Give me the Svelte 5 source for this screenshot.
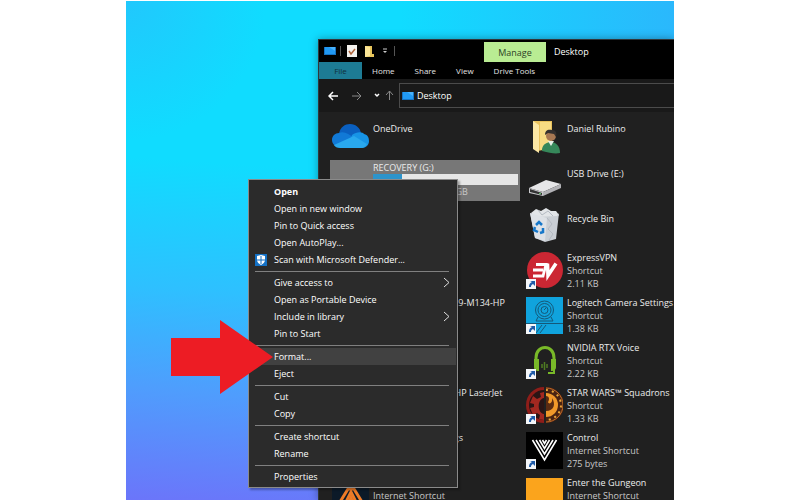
<script>
    const menuGroups = [
        [
            { label: 'Open', primary: true },
            { label: 'Open in new window' },
            { label: 'Pin to Quick access' },
            { label: 'Open AutoPlay...' },
            { label: 'Scan with Microsoft Defender...', shield: true }
        ],
        [
            { label: 'Give access to', submenu: true },
            { label: 'Open as Portable Device' },
            { label: 'Include in library', submenu: true },
            { label: 'Pin to Start' }
        ],
        [{ label: 'Format...', active: true }, { label: 'Eject' }],
        [{ label: 'Cut' }, { label: 'Copy' }],
        [{ label: 'Create shortcut' }, { label: 'Rename' }],
        [{ label: 'Properties' }]
    ];

    // Listed column by column, the way Explorer fills the tiles view
    const files = [
        { name: 'OneDrive', icon: 'onedrive' },
        { name: 'RECOVERY (G:)', used: 20, free: '23.2 GB free of 292 GB' },
        { name: 'This PC' },
        { name: 'Network Explorer', lines: [] },
        { name: 'HP LaserJet Pro M129-M134-HP', lines: [] },
        { name: 'Libraries' },
        { name: 'HP Scan and Prints HP LaserJet', lines: [] },
        { name: 'Windows HQ Settings', lines: [] },
        { name: 'Among Us', icon: 'flame', lines: ['Internet Shortcut'] },
        { name: 'Daniel Rubino', icon: 'user' },
        { name: 'USB Drive (E:)', icon: 'drive' },
        { name: 'Recycle Bin', icon: 'bin' },
        { name: 'ExpressVPN', icon: 'vpn', shortcut: true, lines: ['Shortcut', '2.11 KB'] },
        { name: 'Logitech Camera Settings', icon: 'camera', shortcut: true, lines: ['Shortcut', '1.38 KB'] },
        { name: 'NVIDIA RTX Voice', icon: 'headset', shortcut: true, lines: ['Shortcut', '2.22 KB'] },
        { name: 'STAR WARS™ Squadrons', icon: 'squadrons', shortcut: true, lines: ['Shortcut', '1.33 KB'] },
        { name: 'Control', icon: 'control', shortcut: true, lines: ['Internet Shortcut', '275 bytes'] },
        { name: 'Enter the Gungeon', icon: 'gungeon', lines: ['Internet Shortcut'] }
    ];
</script>

{#snippet monitor()}
    <svg class="monitor" viewBox="0 0 12 10" aria-hidden="true">
        <path d="M0 1h12v8H0z" fill="#1673c4" />
        <path d="M1 1h10v7H1z" fill="#2199f3" />
        <path d="M5 1h6v4z" fill="#48b2fb" />
    </svg>
{/snippet}

{#snippet fileIcon(kind)}
    {#if kind === 'onedrive'}
        <path d="M7 17C8 10 13 7 18 7c6 0 10 4 11 9l-9 10z" fill="#0a5fbf" />
        <path d="M7 16c5-2 10 1 15 5l-3 8-13 1c-4-1-6-4-6-7 0-4 3-7 7-7z" fill="#1179d6" />
        <path d="M20 18c5-4 11-3 12-1 4 1 5 4 5 7 0 4-3 7-7 7H16z" fill="#1794e6" />
        <path d="M2 28l20-9 13 8c-1 2-3 4-6 4H8c-3 0-5-1-6-3z" fill="#29a8ee" />
    {:else if kind === 'flame'}
        <path d="M0 1h37v36H0z" fill="#0c1a28" />
        <path d="M8 25l8-13h6l8 13M14 25l5-10 5 10" fill="none" stroke="#ee7b27" stroke-width="3" />
        <path d="M19 17l3 7h-6z" fill="#ee7b27" />
    {:else if kind === 'user'}
        <path d="M7 4h19v27l-14 3z" fill="#e9c25c" />
        <path d="M14 5h11v26l-11 2z" fill="#f8dc83" />
        <path d="M7 4l6 4v28l-6-4z" fill="#fbe7a4" />
        <path d="M16 32c1-5 5-7 9-7 5 0 9 4 9 11-5 1-10 0-18-2z" fill="#36885a" />
        <path d="M22 24l3 5 3-5z" fill="#e6efe6" />
        <circle cx="25" cy="19" r="5" fill="#a87852" />
        <path d="M19 18c0-5 3-6 7-5 4 0 5 3 4 7l-2-3-6-1z" fill="#34302e" />
    {:else if kind === 'drive'}
        <path d="M3 26l17-8 15 4-18 8z" fill="#e6e6e8" />
        <path d="M17 30l18-8v4l-18 8z" fill="#b2b2b6" />
        <path d="M3 26l14 4v4L3 31z" fill="#c9c9cc" />
        <path d="M4 27l12 4v2L4 30z" fill="#333" />
        <path d="M13 31h2v1h-2z" fill="#5ec46a" />
    {:else if kind === 'bin'}
        <path d="M5 6l5-4 5 2 5-3 5 3 5 0 3 4-4 5H9z" fill="#e2e5e8" />
        <path d="M4 6l5 4 22-1 2-3-3 26-11 3-10-4z" fill="#c9ced4" />
        <path d="M4 6l17 5-2 23-10-3z" fill="#dde1e6" />
        <path d="M21 11l5 6-4 5 5 5-4 6M12 3l4 5 6-4 5 5" fill="none" stroke="#b4bac2" />
        <path d="M10 18l3-3 3 3M17 21l0 4-3 1M12 25l-4-2 1-3" fill="none" stroke="#1677c9" stroke-width="2.500" />
    {:else if kind === 'vpn'}
        <circle cx="19" cy="18" r="18" fill="#cb2733" />
        <path d="M10 12.500h10l-3 11.500H7M7 18h10" fill="none" stroke="#fff" stroke-width="2.800" />
        <path d="M21.500 11.500l.500 12 8-12" fill="none" stroke="#fff" stroke-width="3.500" />
    {:else if kind === 'camera'}
        <path d="M0 0h37v37H0z" fill="#10a3dd" />
        <g fill="none" stroke="#145879">
            <circle cx="18.500" cy="13" r="9" />
            <circle cx="18.500" cy="13" r="6.500" />
            <circle cx="18.500" cy="13" r="3.500" />
            <path d="M18 13l2-2M12 20l-2 4h17l-2-4M0 26.500h37M10 36l6-8M14 36l6-8" />
        </g>
    {:else if kind === 'headset'}
        <g fill="none" stroke="#79b928" stroke-width="3">
            <path d="M10 20v-4c0-14 18-14 18 0v4" />
            <path d="M28 26v5h-6" stroke-width="2" />
        </g>
        <path d="M8 17h5v12c-3 0-5-1-5-4zM25 17h5v8c0 3-2 4-5 4z" fill="#79b928" />
        <path d="M16 22v4M18.500 20v8M21 22v4" stroke="#4f7c22" stroke-width="1.500" />
    {:else if kind === 'squadrons'}
        <path d="M18 0a18 18 0 0 0 0 36z" fill="#8f1d19" />
        <path d="M20 0a18 18 0 0 1 0 36z" fill="#4a2312" />
        <path d="M18 3a15 15 0 0 0 0 30z" fill="#2b1515" />
        <path d="M18 5l-4 1 1 4-4 2-4-3-3 7 4 1v3l-4 1 3 7 4-2 3 2-1 4 5 1v-6c-7-1-7-15 0-16z" fill="#a32820" />
        <path d="M20 6a12 12 0 0 1 0 24z" fill="#f0982a" />
        <path d="M20 9c3 0 4 3 2 6 1 3 5 1 4-4 4 6 2 13-6 13z" fill="#5a2b12" />
        <path d="M20 3a15 15 0 0 1 0 30" fill="none" stroke="#e9a53a" stroke-width="2" stroke-dasharray="2 4" />
        <path d="M20 1a17 17 0 0 1 0 34" fill="none" stroke="#c8702a" />
        <path d="M19 0v36" stroke="#202020" />
    {:else if kind === 'control'}
        <path d="M0 0h37v37H0z" fill="#000" />
        <g fill="none" stroke="#fff" stroke-width="1.600">
            <path d="M6.500 8l12 20 12-20" />
            <path d="M10 8l8.500 14L27 8" />
            <path d="M13.500 8l5 8.500 5-8.500" />
            <path d="M16.500 8l2 3.500 2-3.500" />
        </g>
    {:else if kind === 'gungeon'}
        <path d="M0 1h37v36H0z" fill="#fba41c" />
    {/if}
{/snippet}

<main class="page">
    <div class="desktop">
        <section class="explorer" aria-label="Desktop">
            <header class="titlebar">
                <div class="quick-access">
                    {@render monitor()}
                    <span class="divider"></span>
                    <button type="button" aria-label="Properties">
                        <svg viewBox="0 0 10 12" width="10" height="12">
                            <path d="M0 0h10v12H0z" fill="#f3f1ee" />
                            <path d="M2 6l2 3 4-5" fill="none" stroke="#b0643c" stroke-width="1.500" />
                        </svg>
                    </button>
                    <button type="button" aria-label="New folder">
                        <svg viewBox="0 0 9 11" width="9" height="11">
                            <path d="M0 0h7v8h2v3H0z" fill="#e7c55c" />
                            <path d="M0 0l5 1v9l-5 1z" fill="#fbe597" />
                        </svg>
                    </button>
                    <button type="button" aria-label="Customize Quick Access Toolbar">
                        <svg viewBox="0 0 6 6" width="6" height="6">
                            <path d="M1 1h4" stroke="#ccc" />
                            <path d="M1 3h4L3 5z" fill="#ccc" />
                        </svg>
                    </button>
                    <span class="divider"></span>
                </div>
                <button type="button" class="manage">Manage</button>
                <h1>Desktop</h1>
            </header>

            <nav class="ribbon" aria-label="Ribbon">
                <button type="button" class="file-tab">File</button>
                <button type="button">Home</button>
                <button type="button">Share</button>
                <button type="button">View</button>
                <button type="button">Drive Tools</button>
            </nav>

            <div class="toolbar">
                <button type="button" class="step" aria-label="Back">
                    <svg viewBox="0 0 11 10" width="11" height="10" class="bright">
                        <path d="M10 5H1M5 1L1 5l4 4" />
                    </svg>
                </button>
                <button type="button" class="step" aria-label="Forward">
                    <svg viewBox="0 0 11 10" width="11" height="10">
                        <path d="M1 5h9M6 1l4 4-4 4" />
                    </svg>
                </button>
                <button type="button" aria-label="Recent locations">
                    <svg viewBox="0 0 6 5" width="6" height="5" class="bright">
                        <path d="M1 1l2 2 2-2" />
                    </svg>
                </button>
                <button type="button" aria-label="Up">
                    <svg viewBox="0 0 9 11" width="9" height="11">
                        <path d="M4.500 10V1M1 5l3.500-4L8 5" />
                    </svg>
                </button>
                <label class="address">
                    {@render monitor()}
                    <input type="text" value="Desktop" aria-label="Address" />
                </label>
            </div>

            <ul class="files">
                {#each files as file}
                    <li class:selected={file.used} class:single={!file.lines && !file.used}>
                        <span class="icon">
                            <svg viewBox="0 0 37 37" width="37" height="37" aria-hidden="true">
                                {@render fileIcon(file.icon)}
                                {#if file.shortcut}
                                    <path d="M0 27h10v10H0z" fill="#f4f6f9" />
                                    <path d="M3 35c0-3 1-4 3-5l-2-1h5v5l-2-2c-2 1-2 2-2 3z" fill="#1f5ba8" />
                                {/if}
                            </svg>
                        </span>
                        <div class="details">
                            <span class="name">{file.name}</span>
                            {#if file.used}
                                <div class="capacity">
                                    <div class="used" style:width="{file.used}%"></div>
                                </div>
                                <span>{file.free}</span>
                            {/if}
                            {#each file.lines ?? [] as line}
                                <span>{line}</span>
                            {/each}
                        </div>
                    </li>
                {/each}
            </ul>
        </section>

        <div class="menu" role="menu">
            {#each menuGroups as group, i}
                {#if i > 0}
                    <hr />
                {/if}
                {#each group as item}
                    <button type="button" role="menuitem" class:primary={item.primary} class:active={item.active}>
                        <span class="slot">
                            {#if item.shield}
                                <svg viewBox="0 0 12 12" width="12" height="12">
                                    <path d="M0 0h12v12H0z" fill="#1471c5" />
                                    <path d="M6 1l4 1v4c0 2-2 4-4 5-2-1-4-3-4-5V2z" fill="#fff" />
                                    <path d="M6 2v8M2 6h8" stroke="#1471c5" />
                                </svg>
                            {/if}
                        </span>
                        {item.label}
                        {#if item.submenu}
                            <svg class="chevron" viewBox="0 0 7 11" width="7" height="11">
                                <path d="M1 1l5 4.500L1 10" fill="none" stroke="#e0e0e0" />
                            </svg>
                        {/if}
                    </button>
                {/each}
            {/each}
        </div>

        <svg class="pointer" viewBox="0 0 102 74" width="102" height="74" aria-hidden="true">
            <path d="M0 18h49V0l53 37-53 37V56H0z" fill="#ed1c24" />
        </svg>
    </div>
</main>

<style>
    :global(body) {
        margin: 0;
        background: #fff;
    }

    .page {
        box-sizing: border-box;
        height: 100vh;
        padding: 1px 125px 0 126px;
        font: 9px/13px 'Open Sans', 'Noto Sans', sans-serif;
        color: #e4e4e4;
    }

    .desktop {
        position: relative;
        height: 100%;
        overflow: hidden;
        background:
            radial-gradient(circle at 0 0, rgba(50, 180, 250, 0.5), transparent 140px),
            linear-gradient(to right, transparent 50%, rgba(60, 160, 250, 0.6)) top / 100% 60px no-repeat,
            linear-gradient(184deg, #10dcff 0, #10dcff 36%, #2ec0ff 60%, #4f9dfd 79%, #6b75fa 100%);
    }

    button,
    input {
        font: inherit;
        color: inherit;
        margin: 0;
        padding: 0;
        border: 0;
        background: none;
    }

    svg {
        display: block;
        flex: none;
    }

    .explorer {
        position: absolute;
        inset: 38px 0 0 192px;
        overflow: hidden;
        border: 1px solid #30363a;
        border-width: 1px 0 0 1px;
        background: #202020;
        box-shadow: 0 0 8px rgba(0, 0, 0, 0.35);
    }

    .titlebar {
        display: flex;
        height: 22px;
        background: #000;
    }

    .quick-access {
        display: flex;
        flex: 0 0 160px;
        align-items: center;
        gap: 4px;
        padding-left: 5px;
    }

    .quick-access button {
        padding: 0 2px;
    }

    .monitor {
        width: 12px;
        height: 10px;
    }

    .divider {
        width: 1px;
        height: 10px;
        background: #555;
    }

    .manage {
        width: 62px;
        margin-top: 2px;
        background: #b9ec93;
        color: #2c4025;
    }

    h1 {
        margin: 0;
        padding: 5px 8px;
        font: inherit;
        color: #fff;
    }

    .ribbon {
        display: flex;
        height: 17px;
        background: #000;
    }

    .ribbon button {
        padding: 0 10px;
        font-size: 8px;
    }

    .ribbon .file-tab {
        width: 43px;
        background: #1d7b94;
        color: #10303c;
    }

    .toolbar {
        display: flex;
        align-items: center;
        gap: 5px;
        height: 25px;
        padding: 4px 0 4px 9px;
        background: #191919;
    }

    .toolbar .step {
        padding-right: 7px;
    }

    .toolbar button svg {
        fill: none;
        stroke: #888;
    }

    .toolbar button svg.bright {
        stroke: #fff;
        stroke-width: 1.5;
    }

    .address {
        display: flex;
        flex: 1;
        align-items: center;
        gap: 3px;
        height: 23px;
        padding-left: 2px;
        border: 1px solid #4b4b4b;
        border-right: 0;
    }

    .address input {
        flex: 1;
        min-width: 0;
        color: #fff;
    }

    .files {
        display: grid;
        grid-template: repeat(9, 41px) / repeat(2, 190px);
        grid-auto-flow: column;
        gap: 4px;
        margin: 0;
        padding: 3px 0 0 11px;
        list-style: none;
    }

    .files li {
        display: flex;
        gap: 4px;
        padding: 1px 2px;
        white-space: nowrap;
    }

    .icon {
        padding-top: 1px;
    }

    .details {
        display: flex;
        flex: 1;
        flex-direction: column;
        color: #c8c8c8;
    }

    .name {
        color: #ececec;
    }

    .single .details {
        padding-top: 6px;
    }

    .files .selected {
        background: #777;
    }

    .capacity {
        height: 11px;
        background: #e6e6e6;
    }

    .used {
        height: 100%;
        background: #2d94cb;
    }

    .menu {
        position: absolute;
        top: 178px;
        left: 122px;
        display: flex;
        flex-direction: column;
        box-sizing: border-box;
        width: 210px;
        padding: 3px 1px 2px 0;
        border: 1px solid #8a8a8a;
        background: #2b2b2b;
        box-shadow: 2px 2px 2px rgba(0, 0, 0, 0.3);
    }

    .menu button {
        display: flex;
        align-items: center;
        height: 17px;
        color: #fff;
        white-space: nowrap;
    }

    .menu .primary {
        font-weight: 700;
    }

    .menu .active {
        background: #414141;
    }

    .slot {
        width: 19px;
        padding-left: 6px;
    }

    .chevron {
        margin: 0 6px 0 auto;
    }

    .menu hr {
        width: 194px;
        height: 1px;
        margin: 3px 6px 2px;
        border: 0;
        background: #808080;
    }

    .pointer {
        position: absolute;
        top: 319px;
        left: 45px;
    }
</style>
